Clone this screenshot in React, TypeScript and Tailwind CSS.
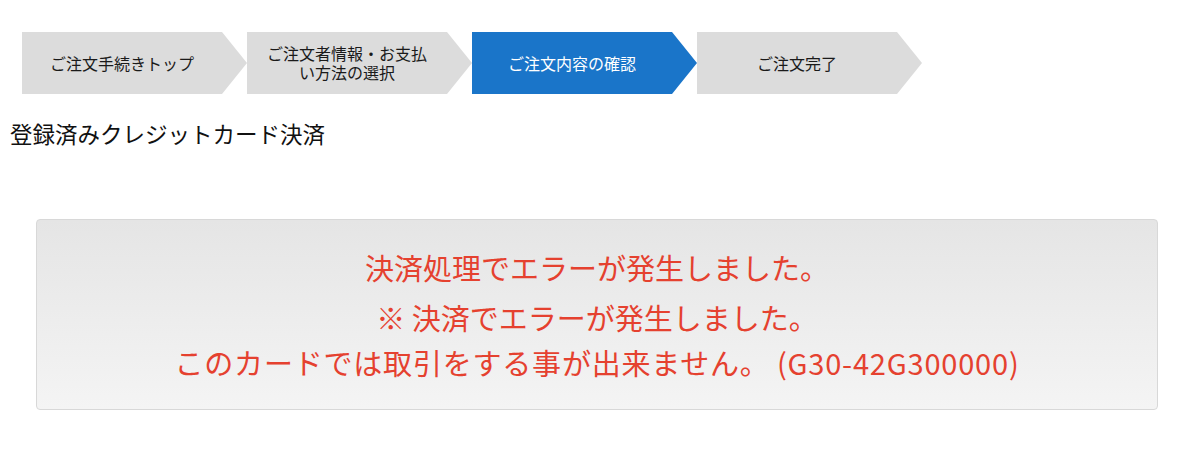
import React from "react";

const steps = [
  { label: "ご注文手続きトップ", active: false },
  { label: "ご注文者情報・お支払い方法の選択", active: false },
  { label: "ご注文内容の確認", active: true },
  { label: "ご注文完了", active: false },
];

export default function App() {
  return (
    <div className="w-[1200px] h-[457px] bg-white font-['Noto_Sans_CJK_JP','Noto_Sans',sans-serif] text-[#111]">
      <div className="flex pl-[22px] pt-[32px]">
        {steps.map((s) => (
          <div
            key={s.label}
            className={
              "w-[225px] h-[62px] flex items-center justify-center pr-[25px] [clip-path:polygon(0_0,calc(100%-25px)_0,100%_50%,calc(100%-25px)_100%,0_100%)] " +
              (s.active ? "bg-[#1a75c9] text-white" : "bg-[#dcdcdc] text-[#1a1a1a]")
            }
          >
            <div className="px-[16px] text-center text-[16px] leading-[19px]">{s.label}</div>
          </div>
        ))}
      </div>
      <h2 className="ml-[10px] mt-[24px] text-[22.5px] leading-[30px] font-normal">登録済みクレジットカード決済</h2>
      <div className="ml-[36px] mt-[71px] w-[1122px] h-[191px] rounded-[4px] border border-[#d8d8d8] bg-gradient-to-b from-[#e5e5e5] to-[#f4f4f4] flex flex-col items-center justify-center text-[#e5412f] text-[29px] text-center">
        <p className="leading-[45px] mb-[5px]">決済処理でエラーが発生しました。</p>
        <p className="leading-[45px]">※ 決済でエラーが発生しました。</p>
        <p className="leading-[45px] tracking-[0.8px]">このカードでは取引をする事が出来ません。 (G30-42G300000)</p>
      </div>
    </div>
  );
}
